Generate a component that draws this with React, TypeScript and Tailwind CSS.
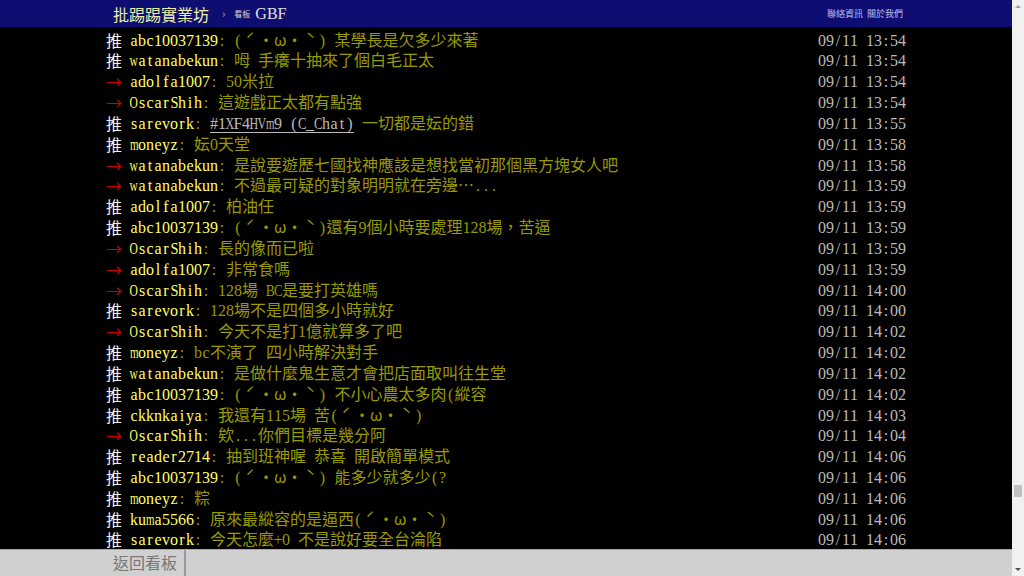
import React from "react";

type Push = { tag: "推" | "→"; user: string; content: string; link?: string; time: string };

const WIDE: Record<string, string> = {
  m: "scale-x-[0.68]",
  w: "scale-x-[0.72]",
  O: "scale-x-[0.72]",
  C: "scale-x-[0.8]",
  H: "scale-x-[0.75]",
  V: "scale-x-[0.75]",
  X: "scale-x-[0.75]",
  B: "scale-x-[0.85]",
  S: "scale-x-[0.9]",
};

function M({ t, cls = "" }: { t: string; cls?: string }) {
  const out: React.ReactNode[] = [];
  let buf = "";
  let k = 0;
  const flush = () => {
    if (buf) {
      out.push(<span key={k++}>{buf}</span>);
      buf = "";
    }
  };
  for (const ch of t) {
    if (ch.charCodeAt(0) < 128) {
      flush();
      out.push(
        <span
          key={k++}
          className={`inline-flex w-[8px] justify-center font-['Liberation_Serif',serif] ${cls}`}
        >
          <span className={WIDE[ch] ?? ""}>{ch}</span>
        </span>
      );
    } else if (ch === "ˊ" || ch === "ˋ") {
      flush();
      out.push(
        <span key={k++} className="inline-block w-[16px] text-center">
          {ch}
        </span>
      );
    } else {
      buf += ch;
    }
  }
  flush();
  return <>{out}</>;
}

const K = "(ˊ・ω・ˋ)";

const pushes: Push[] = [
  { tag: "推", user: "abc10037139", content: `${K} 某學長是欠多少來著`, time: "09/11 13:54" },
  { tag: "推", user: "watanabekun", content: "呣 手癢十抽來了個白毛正太", time: "09/11 13:54" },
  { tag: "→", user: "adolfa1007", content: "50米拉", time: "09/11 13:54" },
  { tag: "→", user: "OscarShih", content: "這遊戲正太都有點強", time: "09/11 13:54" },
  { tag: "推", user: "sarevork", link: "#1XF4HVm9 (C_Chat)", content: " 一切都是妘的錯", time: "09/11 13:55" },
  { tag: "推", user: "moneyz", content: "妘0天堂", time: "09/11 13:58" },
  { tag: "→", user: "watanabekun", content: "是說要遊歷七國找神應該是想找當初那個黑方塊女人吧", time: "09/11 13:58" },
  { tag: "→", user: "watanabekun", content: "不過最可疑的對象明明就在旁邊…...", time: "09/11 13:59" },
  { tag: "推", user: "adolfa1007", content: "柏油任", time: "09/11 13:59" },
  { tag: "推", user: "abc10037139", content: `${K}還有9個小時要處理128場，苦逼`, time: "09/11 13:59" },
  { tag: "→", user: "OscarShih", content: "長的像而已啦", time: "09/11 13:59" },
  { tag: "→", user: "adolfa1007", content: "非常食嗎", time: "09/11 13:59" },
  { tag: "→", user: "OscarShih", content: "128場 BC是要打英雄嗎", time: "09/11 14:00" },
  { tag: "推", user: "sarevork", content: "128場不是四個多小時就好", time: "09/11 14:00" },
  { tag: "→", user: "OscarShih", content: "今天不是打1億就算多了吧", time: "09/11 14:02" },
  { tag: "推", user: "moneyz", content: "bc不演了 四小時解決對手", time: "09/11 14:02" },
  { tag: "推", user: "watanabekun", content: "是做什麼鬼生意才會把店面取叫往生堂", time: "09/11 14:02" },
  { tag: "推", user: "abc10037139", content: `${K} 不小心農太多肉(縱容`, time: "09/11 14:02" },
  { tag: "推", user: "ckknkaiya", content: `我還有115場 苦${K}`, time: "09/11 14:03" },
  { tag: "→", user: "OscarShih", content: "欸...你們目標是幾分阿", time: "09/11 14:04" },
  { tag: "推", user: "reader2714", content: "抽到班神喔 恭喜 開啟簡單模式", time: "09/11 14:06" },
  { tag: "推", user: "abc10037139", content: `${K} 能多少就多少(?`, time: "09/11 14:06" },
  { tag: "推", user: "moneyz", content: "粽", time: "09/11 14:06" },
  { tag: "推", user: "kuma5566", content: `原來最縱容的是逼西${K}`, time: "09/11 14:06" },
  { tag: "推", user: "sarevork", content: "今天怎麼+0 不是說好要全台淪陷", time: "09/11 14:06" },
];

const MONO = "font-['Noto_Sans_Mono_CJK_TC','Noto_Sans_CJK_TC',monospace]";

function Row({ p }: { p: Push }) {
  return (
    <div className="flex h-[20.83px] items-center whitespace-pre leading-[20.83px] text-[16px]">
      <span className={p.tag === "推" ? "text-[#f4f4f4]" : "text-[#cc0000]"}>{p.tag}</span>
      <M t=" " />
      <span className="text-[#ffff66]">
        <M t={p.user} />
      </span>
      <span className="text-[#999900]">
        <M t=": " />
        {p.link && (
          <span className="text-[#bbbbbb]">
            <M t={p.link} cls="leading-[18px] shadow-[inset_0_-1px_0_#bbbbbb]" />
          </span>
        )}
        <M t={p.content} />
      </span>
      <span className="ml-auto text-[#bbbbbb]">
        <M t={p.time} />
      </span>
    </div>
  );
}

function Scrollbar() {
  return (
    <div className="flex h-full w-[12px] flex-col items-center bg-[#f1f1f1]">
      <div className="mt-[5px] h-0 w-0 border-x-[3px] border-b-[3px] border-x-transparent border-b-[#a3a3a3]" />
      <div className="flex-1" />
      <div className="mb-[71px] h-[12px] w-[8px] bg-[#c1c1c1]" />
      <div className="mb-[5px] h-0 w-0 border-x-[3px] border-t-[3px] border-x-transparent border-t-[#505050]" />
    </div>
  );
}

export default function App() {
  return (
    <div className={`flex h-[576px] w-[1024px] overflow-hidden bg-black ${MONO}`}>
      <div className="flex h-full flex-1 flex-col">
        <div className="h-[27px] shrink-0 bg-[#0e0e72]">
          <div className="mx-auto flex h-full w-[800px] items-center pl-[7px]">
            <span className="text-[16px] leading-none text-[#eeeea8]">批踢踢實業坊</span>
            <span className="ml-[13px] text-[11px] leading-none text-[#b0b0b0]">›</span>
            <span className="ml-[9px] text-[8px] leading-none text-[#d0d0d0]">看板</span>
            <span className="ml-[5px] font-['Liberation_Serif',serif] text-[16px] leading-none text-[#e0e0e0]">GBF</span>
            <div className="ml-auto mr-[3px] flex gap-[4px] text-[9px] leading-none text-[#bcbcf0]">
              <span>聯絡資訊</span>
              <span>關於我們</span>
            </div>
          </div>
        </div>
        <div className="min-h-0 flex-1 overflow-hidden pt-[2.6px]">
          <div className="mx-auto w-[800px]">
            {pushes.map((p, i) => (
              <Row key={i} p={p} />
            ))}
          </div>
        </div>
        <div className="h-[27px] shrink-0 border-t border-[#a8a8a8] bg-[#d0d0d0]">
          <div className="mx-auto flex h-full w-[800px]">
            <div className="flex h-full items-center border-r-2 border-[#9a9a9a] px-[7px] pb-[3px] text-[16px] text-[#777777]">
              返回看板
            </div>
          </div>
        </div>
      </div>
      <Scrollbar />
    </div>
  );
}
